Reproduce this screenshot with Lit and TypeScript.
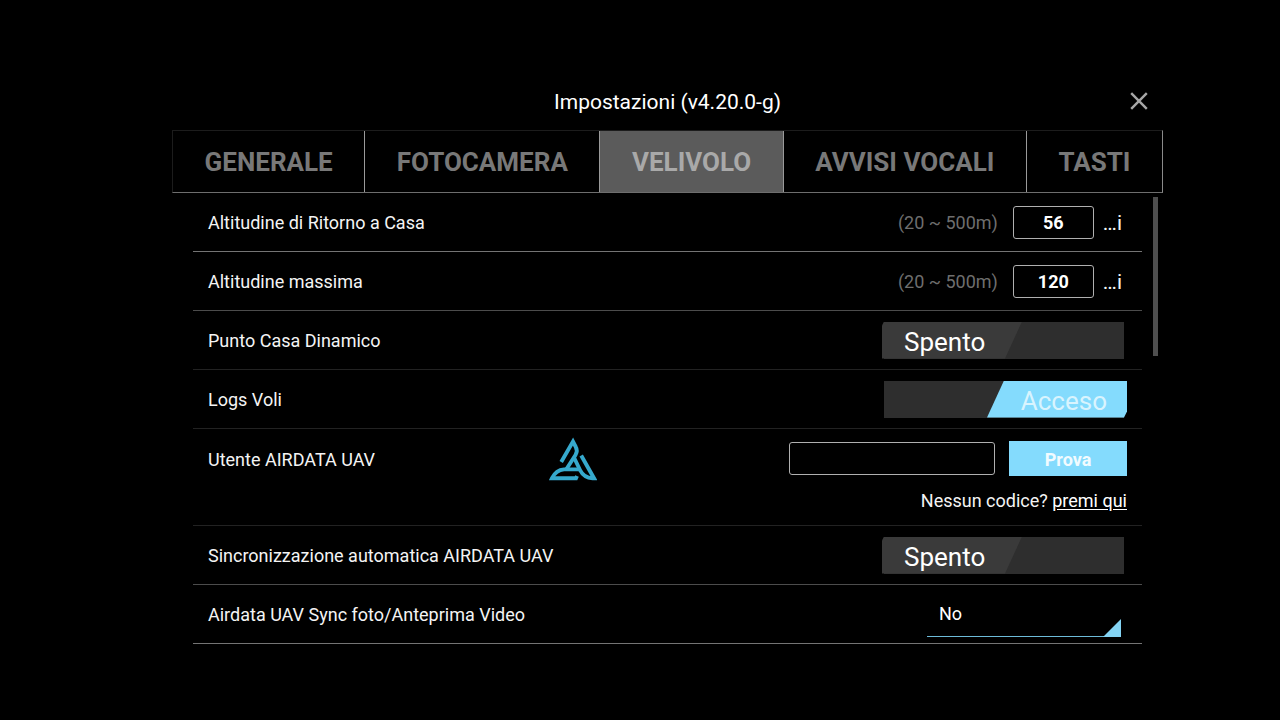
import { LitElement, html, css, svg, TemplateResult } from "lit";
import { customElement, property } from "lit/decorators.js";

@customElement("toggle-switch")
class ToggleSwitch extends LitElement {
  @property({ type: Boolean }) on = false;
  @property() label = "";

  static styles = css`
    :host { display: block; }
    .switch {
      display: flex;
      width: 245px;
      height: 37px;
      padding: 0;
      border: 0;
      background: linear-gradient(#2e2e2e, #2e2e2e) 2px 0 / 240px 37px no-repeat;
      color: #fff;
      font: 400 26px/40px Roboto, sans-serif;
      cursor: pointer;
    }
    .thumb {
      box-sizing: border-box;
      width: 140px;
      height: 37px;
      overflow: hidden;
    }
    .off .thumb {
      padding-left: 22px;
      text-align: left;
      background: #3a3a3a;
      clip-path: polygon(2px 0, 100% 0, 123px 100%, 0 100%, 0 4px);
    }
    .on { justify-content: flex-end; }
    .on .thumb {
      padding-right: 20px;
      text-align: right;
      color: #d9f4fe;
      background: #84dbfd;
      clip-path: polygon(17px 0, 100% 0, 100% 31px, 137px 100%, 0 100%);
    }
  `;

  render() {
    return html`<button
      class="switch ${this.on ? "on" : "off"}"
      type="button"
      role="switch"
      aria-checked=${this.on ? "true" : "false"}
      aria-label=${this.label}
      @click=${() => (this.on = !this.on)}
    ><span class="thumb">${this.on ? "Acceso" : "Spento"}</span></button>`;
  }
}

const closeIcon = svg`<svg width="20" height="20" viewBox="0 0 20 20" aria-hidden="true">
  <path d="M2.200 2.200 17.800 17.800M17.800 2.200 2.200 17.800" stroke="#a6a6a6" stroke-width="2.400" fill="none" />
</svg>`;

const airdataLogo = svg`<svg width="48" height="44" viewBox="0 0 48 44" role="img" aria-label="Airdata">
  <g fill="none" stroke="#36a9cd" stroke-width="3.9">
    <path d="M12.2 25 L24 4.500 L26.800 10 Q29 14 26.500 18 L17.500 32" />
    <path d="M25 20.500 L31 33 Q35 41 43.500 41.200 L45 41.200 L32.200 18.500" />
    <path d="M31 32.400 L15 32.400 Q7 33 3 41.200 L27 41.200 L28 39" />
  </g>
</svg>`;

@customElement("app-root")
class AppRoot extends LitElement {
  static styles = css`
    :host {
      display: block;
      box-sizing: border-box;
      min-height: 100vh;
      padding: 72px 117px 0 172px;
      background: #000;
      color: #f4f4f4;
      font: 400 18px/24px Roboto, sans-serif;
    }
    .header {
      display: grid;
      grid-template-columns: 48px 1fr 48px;
      align-items: center;
      height: 58px;
    }
    .title {
      grid-column: 2;
      margin: 0;
      padding-top: 2px;
      text-align: center;
      font-size: 21px;
      font-weight: 400;
      color: #fff;
    }
    .close {
      display: grid;
      place-items: center;
      width: 48px;
      height: 48px;
      padding: 0;
      border: 0;
      background: none;
    }
    .tabs {
      display: flex;
      height: 63px;
      box-sizing: border-box;
      border: 1px solid #1c1c1c;
      border-right-color: #8a8a8a;
      border-bottom-color: #6e6e6e;
    }
    .tab {
      flex: 1 0 auto;
      padding: 0 31px;
      border: 0;
      border-left: 1px solid #9a9a9a;
      background: none;
      color: #787878;
      font: 700 26px/32px Roboto, sans-serif;
      white-space: nowrap;
    }
    .tab:first-child { border-left: 0; }
    .tab.active {
      background: #5b5b5b;
      color: #a9a9a9;
    }
    .body {
      display: grid;
      grid-template-columns: 1fr 21px;
      padding-left: 21px;
    }
    .row {
      display: flex;
      align-items: center;
      justify-content: space-between;
      box-sizing: border-box;
      height: 59px;
      padding: 0 15px;
      border-bottom: 1px solid #4c4c4c;
    }
    .row.strong { border-bottom-color: #747474; }
    .row.faint { border-bottom-color: #222; }
    .row.account {
      height: 97px;
      align-items: flex-start;
      padding-top: 8px;
    }
    .label, .range { padding-top: 2px; }
    .controls {
      display: flex;
      align-items: center;
    }
    .range {
      margin-right: 15px;
      color: #6e6e6e;
    }
    .field {
      box-sizing: border-box;
      height: 33px;
      padding: 0;
      border: 1px solid #b0b0b0;
      border-radius: 3px;
      background: #000;
      color: #fff;
      font: 700 18px/24px Roboto, sans-serif;
      text-align: center;
    }
    .number { width: 81px; }
    .user { width: 206px; }
    .unit {
      margin: 0 5px 0 9px;
      padding-top: 2px;
      font-size: 21px;
    }
    .account-name {
      display: flex;
      align-items: flex-start;
    }
    .account-label {
      width: 341px;
      padding-top: 11px;
    }
    .account-side {
      display: grid;
      justify-items: end;
      gap: 13px;
      padding-top: 4px;
    }
    .account-form {
      display: flex;
      align-items: center;
      gap: 14px;
    }
    .submit {
      width: 118px;
      height: 35px;
      padding: 2px 0 0;
      border: 0;
      background: #84dbfd;
      color: #f2fbff;
      font: 700 18px/24px Roboto, sans-serif;
    }
    .link {
      color: #fff;
      text-underline-offset: 2px;
    }
    .select-wrap {
      position: relative;
      margin: 0 6px 0 0;
    }
    .select {
      display: block;
      box-sizing: border-box;
      width: 194px;
      height: 46px;
      padding: 0 12px;
      border: 0;
      border-bottom: 1px solid #6dbbd9;
      border-radius: 0;
      appearance: none;
      background: #000;
      color: #fff;
      font: 400 18px/24px Roboto, sans-serif;
    }
    .corner {
      position: absolute;
      right: 0;
      bottom: 0;
      width: 18px;
      height: 18px;
      background: #84d4f4;
      clip-path: polygon(100% 0, 100% 100%, 0 100%);
      pointer-events: none;
    }
    .thumb {
      width: 5px;
      height: 159px;
      margin: 4px 0 0 11px;
      background: #4f4f4f;
    }
  `;

  private tabs = ["GENERALE", "FOTOCAMERA", "VELIVOLO", "AVVISI VOCALI", "TASTI"];

  private numberRow(id: string, label: string, value: number, tone: string): TemplateResult {
    return html`<div class="row ${tone}">
      <label class="label" for=${id}>${label}</label>
      <div class="controls">
        <span class="range">(20 ~ 500m)</span>
        <input class="field number" id=${id} type="text" inputmode="numeric" .value=${String(value)} />
        <span class="unit">…i</span>
      </div>
    </div>`;
  }

  private switchRow(label: string, on: boolean, tone: string): TemplateResult {
    return html`<div class="row ${tone}">
      <span class="label">${label}</span>
      <toggle-switch .label=${label} .on=${on}></toggle-switch>
    </div>`;
  }

  render() {
    return html`
      <header class="header">
        <h1 class="title">Impostazioni (v4.20.0-g)</h1>
        <button class="close" type="button" aria-label="Chiudi">${closeIcon}</button>
      </header>
      <nav class="tabs" role="tablist">
        ${this.tabs.map(
          (name) => html`<button
            class="tab ${name === "VELIVOLO" ? "active" : ""}"
            type="button"
            role="tab"
            aria-selected=${name === "VELIVOLO" ? "true" : "false"}
          >${name}</button>`
        )}
      </nav>
      <div class="body">
        <main>
          ${this.numberRow("rth", "Altitudine di Ritorno a Casa", 56, "strong")}
          ${this.numberRow("max", "Altitudine massima", 120, "")}
          ${this.switchRow("Punto Casa Dinamico", false, "faint")}
          ${this.switchRow("Logs Voli", true, "faint")}
          <div class="row account faint">
            <div class="account-name">
              <label class="account-label" for="user">Utente AIRDATA UAV</label>
              ${airdataLogo}
            </div>
            <div class="account-side">
              <div class="account-form">
                <input class="field user" id="user" type="text" />
                <button class="submit" type="button">Prova</button>
              </div>
              <span>Nessun codice? <a class="link" href="#">premi qui</a></span>
            </div>
          </div>
          ${this.switchRow("Sincronizzazione automatica AIRDATA UAV", false, "")}
          <div class="row strong">
            <label class="label" for="sync">Airdata UAV Sync foto/Anteprima Video</label>
            <div class="select-wrap">
              <select class="select" id="sync"><option>No</option></select>
              <span class="corner"></span>
            </div>
          </div>
        </main>
        <div class="thumb"></div>
      </div>
    `;
  }
}
